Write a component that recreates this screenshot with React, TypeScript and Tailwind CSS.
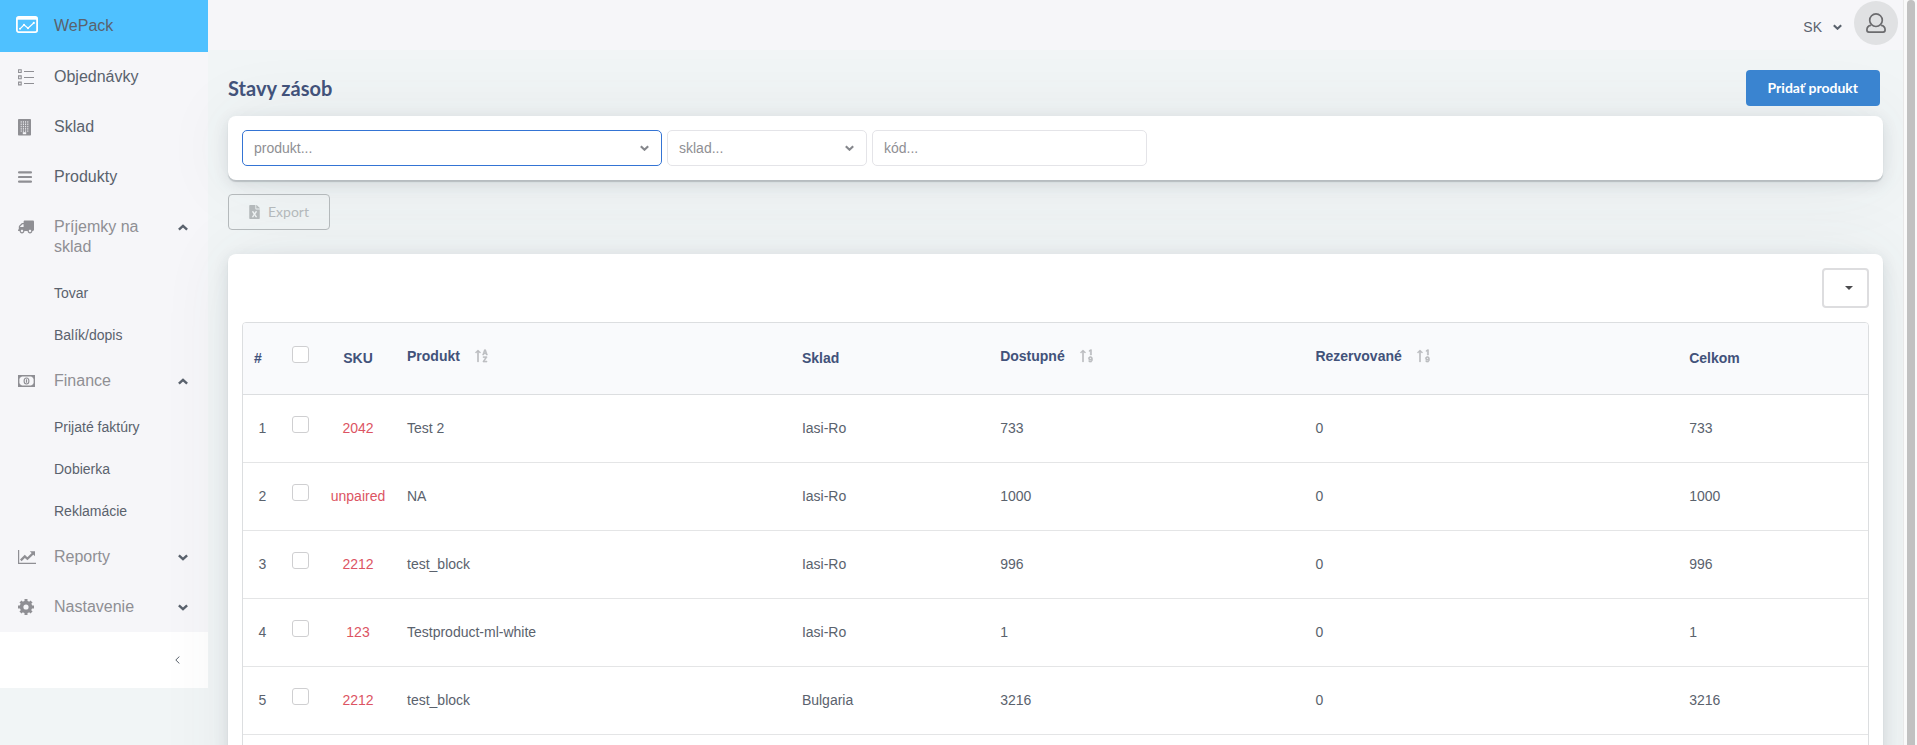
import type { ReactNode } from "react";
import { BsSortAlphaUp, BsSortNumericUp } from "react-icons/bs";
import { FaFileExcel, FaTruck } from "react-icons/fa";

type IconProps = { className?: string };

function Chevron({ className = "" }: IconProps) {
  return (
    <svg viewBox="0 0 10 7" className={className} fill="none" stroke="currentColor" strokeWidth="2.4" aria-hidden="true">
      <path d="M.9 1.300L5 5.200l4.100-3.900" />
    </svg>
  );
}

function BrandIcon() {
  return (
    <svg viewBox="0 0 22 17" className="w-[22px]" fill="none" stroke="#fff" aria-hidden="true">
      <rect x="0.9" y="0.9" width="20.2" height="15.2" rx="1.8" strokeWidth="1.8" />
      <path d="M1 2.4h20" strokeWidth="2.6" />
      <path d="M4 12.8l4-4 4 3.4 6-5.4" strokeWidth="1.2" />
      <g fill="#fff" stroke="none">
        <circle cx="4" cy="12.7" r="1" />
        <circle cx="8" cy="8.8" r="1" />
        <circle cx="12" cy="12.2" r="1" />
        <circle cx="17.8" cy="6.9" r="1.1" />
      </g>
    </svg>
  );
}

function ListIcon() {
  return (
    <svg viewBox="0 0 16 17" className="w-4" fill="none" stroke="currentColor" aria-hidden="true">
      <path d="M.6.7h2.6v2.8H.6zM.6 6.9h2.6v2.8H.6zM.6 13.1h2.6v2.8H.6z" strokeWidth="1.1" />
      <path d="M6 2.5h10M6 8.5h10M6 14.5h10" strokeWidth="1" />
    </svg>
  );
}

function BuildingIcon() {
  return (
    <svg viewBox="0 0 13 17" className="w-[13px]" aria-hidden="true">
      <rect width="13" height="16.5" rx="0.8" fill="currentColor" />
      <path d="M3.2 2.2v10.6M5.4 2.2v10.6M7.6 2.2v10.6M9.8 2.2v10.6" stroke="#f6f6f9" strokeWidth="0.9" strokeDasharray="1.5 0.8" />
      <path d="M4.8 13.2h3.4v2H4.8z" fill="#f6f6f9" />
    </svg>
  );
}

function BarsIcon() {
  return (
    <svg viewBox="0 0 14 12" className="w-3.5" stroke="currentColor" strokeWidth="2.1" strokeLinecap="round" aria-hidden="true">
      <path d="M1 1.4h12M1 6h12M1 10.6h12" />
    </svg>
  );
}

function MoneyIcon() {
  return (
    <svg viewBox="0 0 17 12" className="w-[17px]" fill="none" stroke="currentColor" aria-hidden="true">
      <path d="M.7.7h15.6v10.6H.7z" strokeWidth="1.4" />
      <path d="M1 1h2.6L1 3.6zM16 1h-2.6L16 3.6zM1 11h2.6L1 8.4zM16 11h-2.6L16 8.4z" fill="currentColor" strokeWidth="0.6" />
      <ellipse cx="8.5" cy="6" rx="2.4" ry="3" strokeWidth="1.1" />
      <path d="M8.5 4.3v3.4" strokeWidth="1.2" />
    </svg>
  );
}

function ChartIcon() {
  return (
    <svg viewBox="0 0 18 14" className="w-[18px]" fill="none" stroke="currentColor" aria-hidden="true">
      <path d="M.6 0v13.3H18" strokeWidth="1.2" />
      <path d="M2.8 10.4l4-4 2.6 2.4 5.6-5.4" strokeWidth="2.2" />
      <path d="M11.8 1.2H17v5z" fill="currentColor" stroke="none" />
    </svg>
  );
}

function GearIcon() {
  return (
    <svg viewBox="0 0 16 16" className="size-4" fill="none" stroke="currentColor" aria-hidden="true">
      <circle cx="8" cy="8" r="4.4" strokeWidth="3.6" />
      <path d="M8 0v3M8 13v3M0 8h3M13 8h3M2.500 2.500l2 2M11.500 11.500l2 2M2.500 13.500l2-2M11.500 4.500l2-2" strokeWidth="3" />
    </svg>
  );
}

function UserIcon() {
  return (
    <svg viewBox="0 0 20 20" className="w-5" fill="none" stroke="#6b6b6e" strokeWidth="1.7" aria-hidden="true">
      <circle cx="10" cy="7.2" r="6.3" />
      <path d="M4.9 12.3C2 12.6.9 14.8.9 17.1c0 1.3.8 2 2 2h14.2c1.2 0 2-.7 2-2 0-2.300-1.100-4.500-4-4.800" />
    </svg>
  );
}

type Item = { label: string; icon: ReactNode; open?: boolean; children?: string[] };

const menu: Item[] = [
  { label: "Objednávky", icon: <ListIcon /> },
  { label: "Sklad", icon: <BuildingIcon /> },
  { label: "Produkty", icon: <BarsIcon /> },
  { label: "Príjemky na sklad", icon: <FaTruck className="size-4 -scale-x-100" />, open: true, children: ["Tovar", "Balík/dopis"] },
  { label: "Finance", icon: <MoneyIcon />, open: true, children: ["Prijaté faktúry", "Dobierka", "Reklamácie"] },
  { label: "Reporty", icon: <ChartIcon />, children: [] },
  { label: "Nastavenie", icon: <GearIcon />, children: [] },
];

function MenuEntry({ item }: { item: Item }) {
  const row = "flex w-full items-start py-[15px] pl-[18px] pr-5 text-left text-base leading-5";
  const icon = <span className="flex h-5 w-9 shrink-0 items-center text-[#8f8f94]">{item.icon}</span>;
  if (!item.children) {
    return (
      <li>
        <a href="#" className={`${row} text-[#5a626d]`}>
          {icon}
          {item.label}
        </a>
      </li>
    );
  }
  return (
    <li>
      <button type="button" aria-expanded={!!item.open} className={`${row} text-[#8f8f94]`}>
        {icon}
        <span className="flex-1 pr-6">{item.label}</span>
        <span className="flex h-5 items-center text-[#5a626d]">
          <Chevron className={item.open ? "w-2.5 rotate-180" : "w-2.5"} />
        </span>
      </button>
      {item.open && (
        <ul>
          {item.children.map((c) => (
            <li key={c}>
              <a href="#" className="block py-[11px] pl-[54px] text-sm leading-5 text-[#5a626d]">
                {c}
              </a>
            </li>
          ))}
        </ul>
      )}
    </li>
  );
}

const rows = [
  { sku: "2042", name: "Test 2", store: "Iasi-Ro", free: 733, reserved: 0, total: 733 },
  { sku: "unpaired", name: "NA", store: "Iasi-Ro", free: 1000, reserved: 0, total: 1000 },
  { sku: "2212", name: "test_block", store: "Iasi-Ro", free: 996, reserved: 0, total: 996 },
  { sku: "123", name: "Testproduct-ml-white", store: "Iasi-Ro", free: 1, reserved: 0, total: 1 },
  { sku: "2212", name: "test_block", store: "Bulgaria", free: 3216, reserved: 0, total: 3216 },
];

function Check({ label }: { label: string }) {
  return (
    <input
      type="checkbox"
      aria-label={label}
      className="mb-2 block size-[17px] appearance-none rounded-[3px] border border-[#cfcfd1] bg-white checked:bg-[#3a84d0]"
    />
  );
}

function Sortable({ label, numeric }: { label: string; numeric?: boolean }) {
  const Icon = numeric ? BsSortNumericUp : BsSortAlphaUp;
  return (
    <button type="button" className="mb-1 flex items-center gap-[14px] font-bold">
      {label}
      <Icon className="size-4 text-[#b9bbbe]" strokeWidth={0.6} />
    </button>
  );
}

function Picker({ label, className }: { label: string; className: string }) {
  return (
    <div className={`grid h-9 items-center ${className}`}>
      <select
        aria-label={label}
        className="col-start-1 row-start-1 h-full w-full appearance-none rounded-[5px] border border-inherit bg-white pl-[11px] pr-8 text-sm text-[#8f8f94] outline-none"
      >
        <option>{label}</option>
      </select>
      <Chevron className="pointer-events-none col-start-1 row-start-1 mr-[13px] w-[9px] justify-self-end text-[#85878c]" />
    </div>
  );
}

const cardShadow =
  "shadow-[0_2px_1px_rgba(40,50,60,0.2),0_4px_16px_rgba(40,60,70,0.12),0_0_70px_rgba(60,80,80,0.08)]";

export default function App() {
  return (
    <div className="flex h-screen overflow-hidden bg-[#f1f5f6] font-['Liberation_Sans',Arial,sans-serif] text-sm text-[#5a626d]">
      <aside className="w-52 shrink-0">
        <a href="#" className="flex h-13 items-center bg-[#4fc1ff] pl-4 text-base text-[#5a626d]">
          <span className="w-[38px] shrink-0 pb-1">
            <BrandIcon />
          </span>
          WePack
        </a>
        <nav className="bg-[#f6f6f9]">
          <ul>
            {menu.map((m) => (
              <MenuEntry key={m.label} item={m} />
            ))}
          </ul>
        </nav>
        <div className="flex h-14 items-center justify-end bg-white pr-7">
          <button type="button" aria-label="Zbaliť menu">
            <svg viewBox="0 0 5 8" className="w-[5px]" fill="none" stroke="#5a626d" aria-hidden="true">
              <path d="M4.400.5L.8 4l3.600 3.500" />
            </svg>
          </button>
        </div>
      </aside>

      <div className="flex min-w-0 flex-1 flex-col">
        <header className="relative z-10 flex h-[50px] shrink-0 items-center justify-end bg-[#f6f6f9] pr-[5px]">
          <button type="button" className="mr-3 flex items-center gap-[11px] pt-1 text-sm">
            SK
            <Chevron className="w-[9px]" />
          </button>
          <button type="button" aria-label="Účet" className="mb-1 flex size-11 items-center justify-center rounded-full bg-[#e0e1e3]">
            <UserIcon />
          </button>
        </header>

        <main className="flex-1 px-5 pt-5">
          <div className="flex h-9 items-center justify-between pr-[3px]">
            <h1 className="font-['Lato',sans-serif] text-xl font-bold text-[#42527a]">Stavy zásob</h1>
            <button type="button" className="h-9 rounded bg-[#3a84d0] px-[22px] font-['Lato',sans-serif] text-sm font-bold text-white">
              Pridať produkt
            </button>
          </div>

          <form className={`mt-2.5 flex gap-[5px] rounded-lg bg-white p-3.5 ${cardShadow}`}>
            <Picker label="produkt..." className="w-[420px] border-[#3474d4]" />
            <Picker label="sklad..." className="w-[200px] border-[#e4e4e8]" />
            <input
              type="text"
              aria-label="kód"
              placeholder="kód..."
              className="h-9 w-[275px] rounded-[5px] border border-[#e4e4e8] bg-white px-[11px] text-sm outline-none placeholder:text-[#8f8f94]"
            />
          </form>

          <button
            type="button"
            disabled
            className="relative mt-3.5 flex h-9 items-center gap-2 rounded border border-[#b4b9bb] px-5 font-['Lato',sans-serif] text-sm text-[#b4b9bb]"
          >
            <FaFileExcel className="h-3.5 w-[11px]" />
            Export
          </button>

          <section className={`mt-6 rounded-lg bg-white p-3.5 ${cardShadow}`}>
            <div className="flex justify-end">
              <button
                type="button"
                aria-label="Stĺpce"
                className="flex h-10 w-[47px] items-center justify-end rounded border-2 border-[#dddddf] pr-3.5"
              >
                <svg viewBox="0 0 8 4" className="w-2" aria-hidden="true">
                  <path d="M0 0h8L4 4z" fill="#4b4b4e" />
                </svg>
              </button>
            </div>
            <div className="mt-3.5 overflow-hidden rounded border border-[#dcdee0]">
              <table className="w-full table-fixed border-collapse text-left">
                <colgroup>
                  <col className="w-[39px]" />
                  <col className="w-[39px]" />
                  <col className="w-[74px]" />
                  <col className="w-[24.3%]" />
                  <col className="w-[12.2%]" />
                  <col className="w-[19.4%]" />
                  <col className="w-[23%]" />
                  <col />
                </colgroup>
                <thead className="bg-[#f9fafc] text-[#42527a]">
                  <tr className="h-[71px] border-b border-[#dcdee0]">
                    <th className="pl-[11px]">#</th>
                    <th className="pl-2.5">
                      <Check label="Vybrať všetko" />
                    </th>
                    <th className="text-center">SKU</th>
                    <th className="px-3">
                      <Sortable label="Produkt" />
                    </th>
                    <th className="px-3">Sklad</th>
                    <th className="px-3">
                      <Sortable label="Dostupné" numeric />
                    </th>
                    <th className="px-3">
                      <Sortable label="Rezervované" numeric />
                    </th>
                    <th className="px-3">Celkom</th>
                  </tr>
                </thead>
                <tbody>
                  {rows.map((r, i) => (
                    <tr key={i} className="h-17 border-b border-[#e4e5e6]">
                      <td className="text-center">{i + 1}</td>
                      <td className="pl-2.5">
                        <Check label={`Vybrať riadok ${i + 1}`} />
                      </td>
                      <td className="text-center text-[#dc5463]">{r.sku}</td>
                      <td className="px-3">{r.name}</td>
                      <td className="px-3">{r.store}</td>
                      <td className="px-3">{r.free}</td>
                      <td className="px-3">{r.reserved}</td>
                      <td className="px-3">{r.total}</td>
                    </tr>
                  ))}
                  <tr className="h-17" aria-hidden="true">
                    <td colSpan={8} />
                  </tr>
                </tbody>
              </table>
            </div>
          </section>
        </main>
      </div>

      <div className="relative z-10 w-3.5 shrink-0 border-l border-[#e8e8e8] bg-[#fafafa] pl-[3px] pr-0.5" aria-hidden="true">
        <div className="h-full rounded-t bg-[#c1c1c1]" />
      </div>
    </div>
  );
}
